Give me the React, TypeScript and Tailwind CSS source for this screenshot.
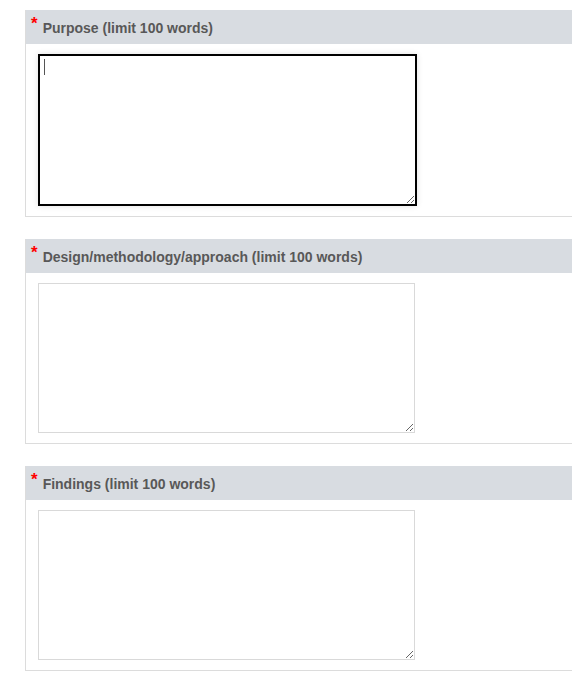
const fields = [
  { label: "Purpose (limit 100 words)", focused: true },
  { label: "Design/methodology/approach (limit 100 words)", focused: false },
  { label: "Findings (limit 100 words)", focused: false },
];

function FieldSection({ label, focused }: { label: string; focused: boolean }) {
  return (
    <section className="mb-[22px] border-b border-l border-[#dcdcdc]">
      <div className="flex h-[34px] items-center bg-[#d8dce1] pl-[5px] pt-[2px]">
        <span className="mr-[5px] -mt-[9px] text-[17px] font-bold leading-none text-[#ff0000]">*</span>
        <h3 className="text-[14px] font-bold text-[#585858]">{label}</h3>
      </div>
      <div className="px-[12px] py-[10px]">
        {focused ? (
          <div className="relative w-[379px]">
            <textarea className="block h-[152px] w-[379px] border-2 border-black bg-white shadow-[0_0_6px_rgba(0,0,0,0.12)] outline-none" />
            <span className="pointer-events-none absolute left-[6px] top-[5px] h-[16px] w-px bg-[#555]" />
          </div>
        ) : (
          <textarea className="block h-[150px] w-[377px] border border-[#d9d9d9] bg-white outline-none" />
        )}
      </div>
    </section>
  );
}

export default function App() {
  return (
    <div
      className="min-h-[688px] bg-white pl-[25px] pt-[10px]"
      style={{ fontFamily: '"Liberation Sans", Arial, sans-serif' }}
    >
      {fields.map((f) => (
        <FieldSection key={f.label} label={f.label} focused={f.focused} />
      ))}
    </div>
  );
}
